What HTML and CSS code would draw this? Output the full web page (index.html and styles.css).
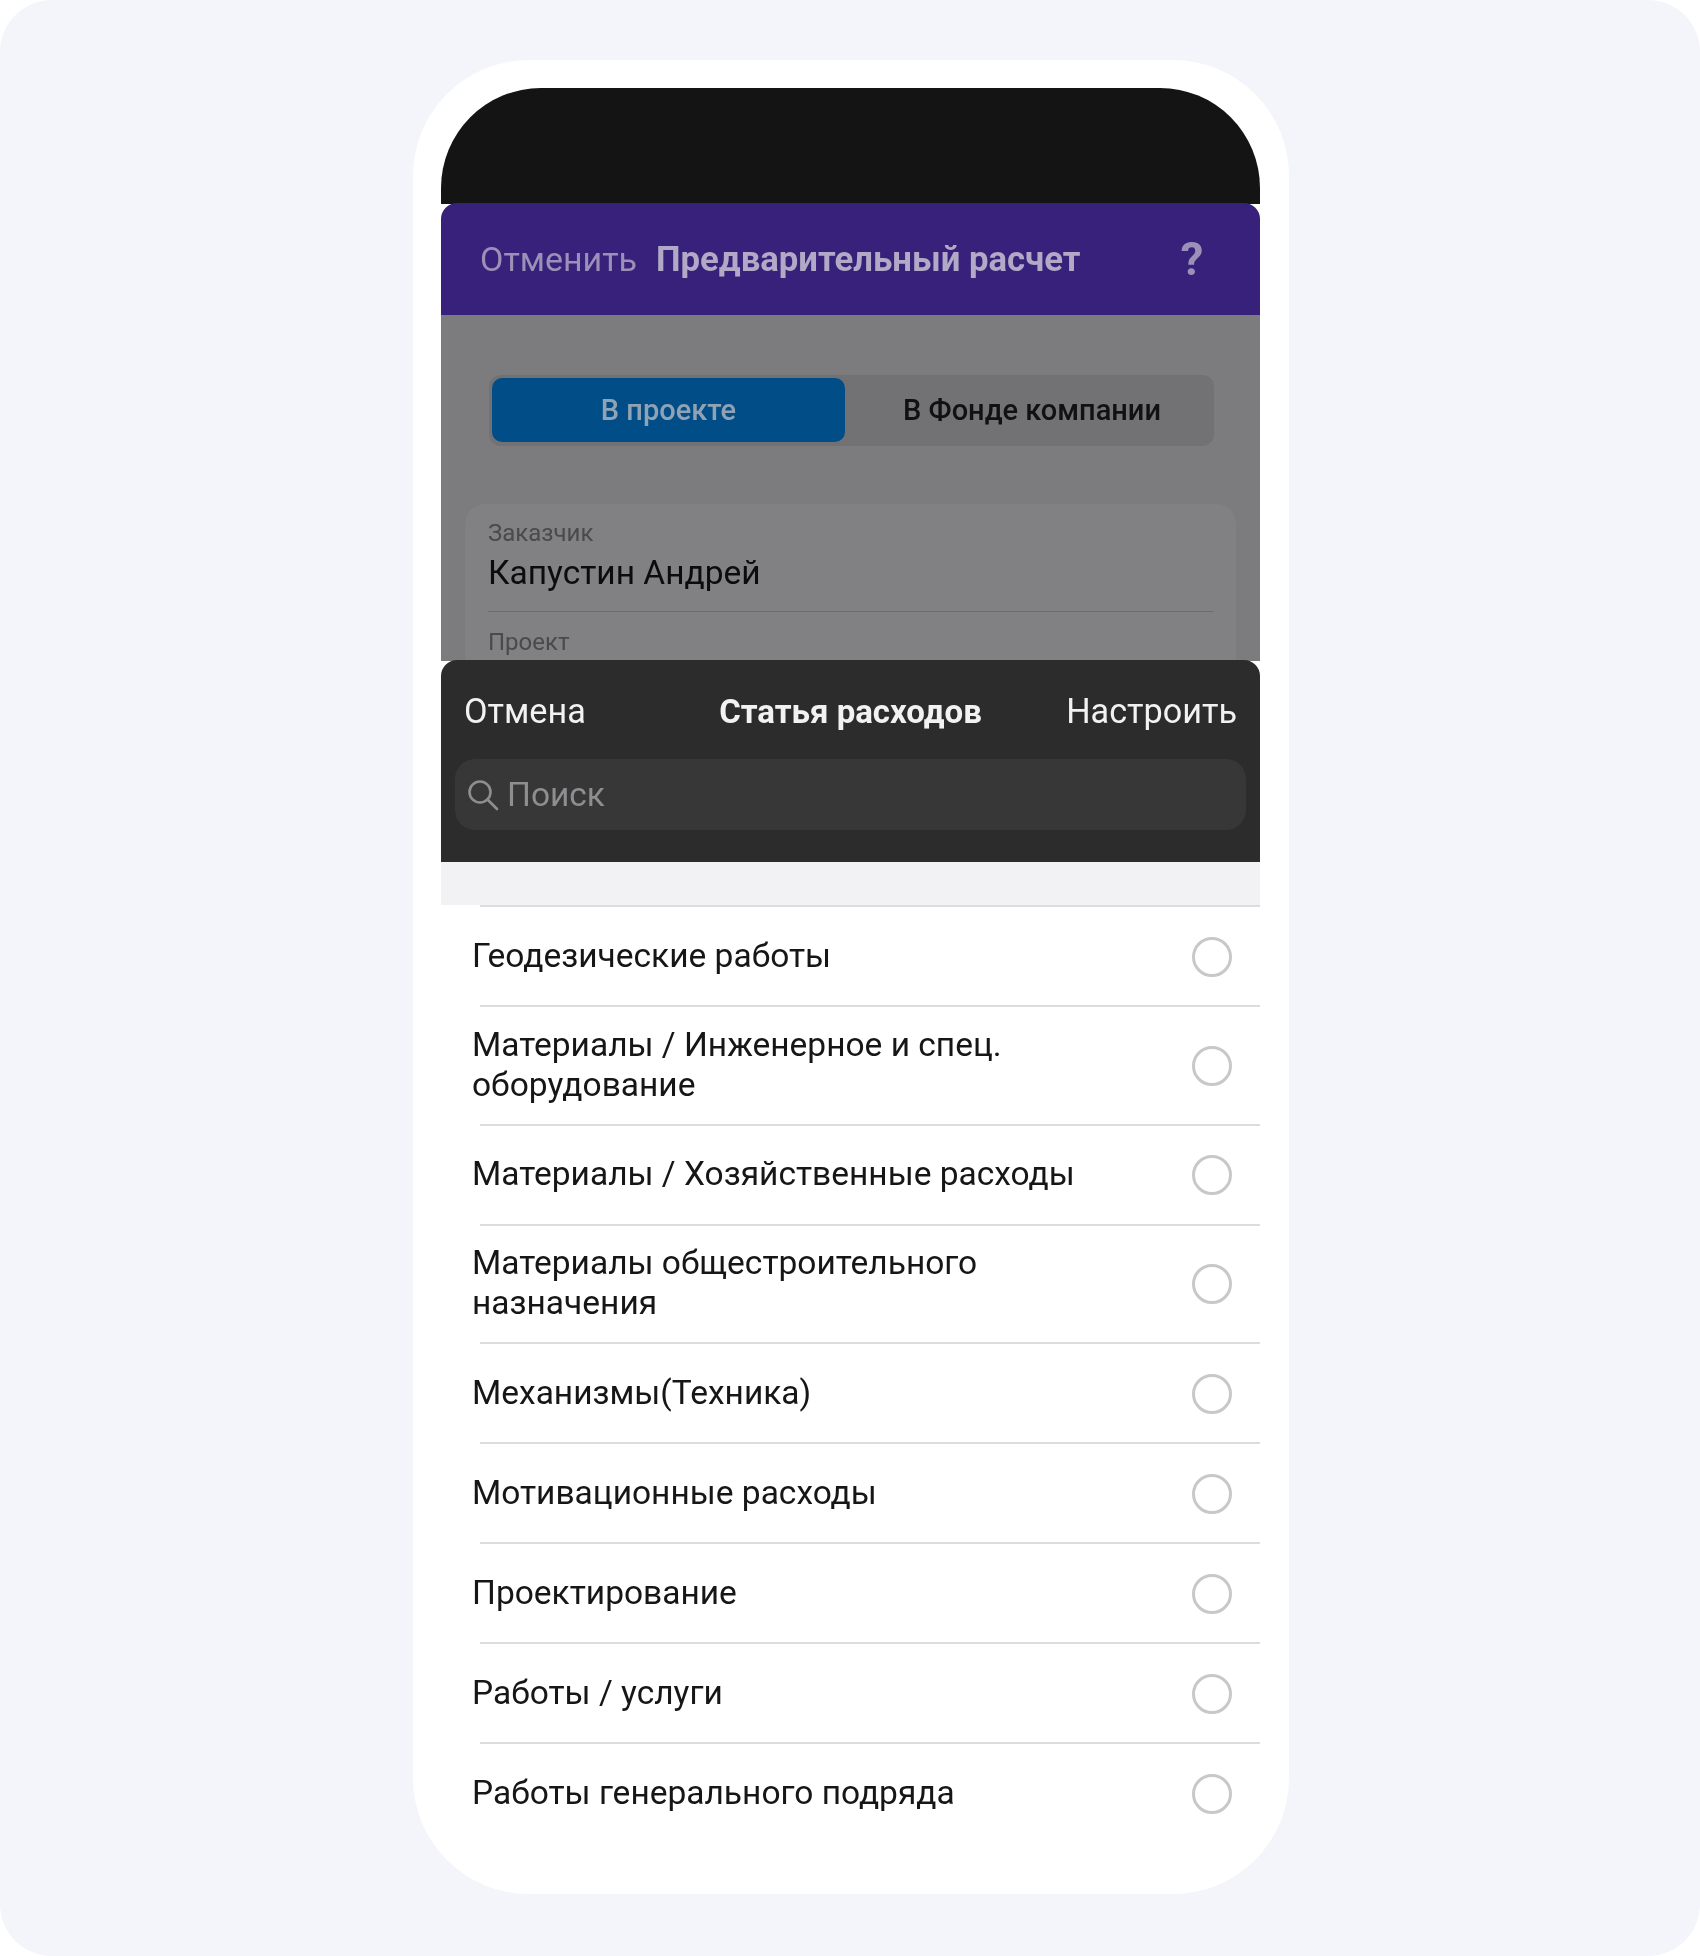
FILE: index.html
```html
<!DOCTYPE html>
<html>
<head>
  <title>Статья расходов</title>
  <link rel="stylesheet" href="styles.css">
</head>
<body>
  <div class="canvas">
    <div class="phone">
      <div class="screen">
        <div class="notch"></div>

        <div class="topbar">
          <span class="topbar-cancel">Отменить</span>
          <span class="topbar-title">Предварительный расчет</span>
          <span class="topbar-help">?</span>
        </div>

        <div class="backdrop">
          <div class="segment">
            <div class="segment-item active">В проекте</div>
            <div class="segment-item">В Фонде компании</div>
          </div>
          <div class="card">
            <div class="card-label">Заказчик</div>
            <div class="card-value">Капустин Андрей</div>
            <div class="card-line"></div>
            <div class="card-label">Проект</div>
          </div>
        </div>

        <div class="sheet">
          <div class="sheet-head">
            <span class="sheet-side">Отмена</span>
            <span class="sheet-title">Статья расходов</span>
            <span class="sheet-side right">Настроить</span>
          </div>
          <div class="search">
            <svg class="search-icon" width="34" height="34" viewBox="0 0 34 34" fill="none" stroke="#8e8e90" stroke-width="2.6">
              <circle cx="14" cy="14" r="10.5"/>
              <path d="M21.5 21.5 L31 31" stroke-linecap="round"/>
            </svg>
            <span>Поиск</span>
          </div>
        </div>
        <div class="band"></div>

        <div class="list">
          <div class="row">
            <div class="row-text">Геодезические работы</div>
            <div class="radio"></div>
          </div>
          <div class="row tall">
            <div class="row-text">Материалы / Инженерное и спец. оборудование</div>
            <div class="radio"></div>
          </div>
          <div class="row">
            <div class="row-text">Материалы / Хозяйственные расходы</div>
            <div class="radio"></div>
          </div>
          <div class="row tall">
            <div class="row-text">Материалы общестроительного назначения</div>
            <div class="radio"></div>
          </div>
          <div class="row">
            <div class="row-text">Механизмы(Техника)</div>
            <div class="radio"></div>
          </div>
          <div class="row">
            <div class="row-text">Мотивационные расходы</div>
            <div class="radio"></div>
          </div>
          <div class="row">
            <div class="row-text">Проектирование</div>
            <div class="radio"></div>
          </div>
          <div class="row">
            <div class="row-text">Работы / услуги</div>
            <div class="radio"></div>
          </div>
          <div class="row">
            <div class="row-text">Работы генерального подряда</div>
            <div class="radio"></div>
          </div>
        </div>
      </div>
    </div>
  </div>
</body>
</html>
```
FILE: styles.css
```css
body {
  margin: 0;
  background-color: #fff;
  font-family: Roboto, "Liberation Sans", sans-serif;
}

.canvas {
  height: 1956px;
  background-color: #f3f5fa;
  border-radius: 52px;
  padding-top: 60px;
  box-sizing: border-box;
}

.phone {
  width: 876px;
  height: 1834px;
  margin-left: 413px;
  padding: 28px 29px 0 28px;
  box-sizing: border-box;
  background-color: #fff;
  border-radius: 116px;
  overflow: hidden;
}

.screen {
  border-radius: 100px 100px 0 0;
  overflow: hidden;
  filter: blur(0.5px);
}

.notch {
  height: 116px;
  background-color: #141414;
}

.topbar {
  height: 112px;
  margin-top: -1px;
  padding: 0 0 0 39px;
  display: flex;
  align-items: center;
  background-color: #37217a;
  border-radius: 16px 16px 0 0;
  font-size: 34px;
}

.topbar-cancel {
  color: #9b90b7;
}

.topbar-title {
  margin-left: 19px;
  color: #b1a9c6;
  font-size: 34.7px;
  font-weight: 700;
}

.topbar-help {
  margin-left: 100px;
  color: #9b90b7;
  font-size: 46px;
  font-weight: 700;
}

.backdrop {
  height: 346px;
  padding: 60px 24px 0;
  box-sizing: border-box;
  background-color: #7c7c7e;
  overflow: hidden;
}

.segment {
  display: flex;
  width: 725px;
  height: 71px;
  margin-left: 24px;
  padding: 3px 3px 4px;
  box-sizing: border-box;
  background-color: #727274;
  border-radius: 12px;
  font-size: 29px;
  font-weight: 500;
  color: #111;
}

.segment-item {
  flex: 1;
  padding-left: 8px;
  display: flex;
  align-items: center;
  justify-content: center;
}

.segment-item.active {
  flex: none;
  width: 353px;
  padding-left: 0;
  background-color: #004d88;
  color: #8fa3b5;
  border-radius: 10px;
}

.card {
  margin-top: 58px;
  padding: 15px 22px 0 23px;
  height: 300px;
  background-color: #818183;
  border-radius: 20px;
}

.card-label {
  font-size: 24px;
  color: #4a4a4c;
}

.card-value {
  margin-top: 6px;
  font-size: 33.5px;
  color: #0c0c0c;
}

.card-line {
  margin: 19px 0 16px;
  height: 1px;
  background-color: #6c6c6e;
}

.sheet {
  height: 202px;
  padding: 0 23px;
  background-color: #2c2c2c;
  border-radius: 16px 16px 0 0;
  margin-top: -1px;
  color: #f2f2f2;
  font-size: 34.2px;
  box-sizing: border-box;
}

.sheet-head {
  height: 99px;
  padding-top: 3px;
  box-sizing: border-box;
  display: flex;
  align-items: center;
}

.sheet-side {
  flex: 1;
}

.sheet-side.right {
  text-align: right;
}

.sheet-title {
  font-weight: 700;
  font-size: 33px;
}

.search {
  height: 71px;
  margin: 0 -9px;
  padding-left: 11px;
  display: flex;
  align-items: center;
  gap: 7px;
  background-color: #373738;
  border-radius: 20px;
  color: #8e8e90;
  font-size: 33.5px;
}

.band {
  height: 43px;
  background-color: #f2f2f4;
}

.row {
  position: relative;
  height: 100px;
  padding: 1px 28px 0 31px;
  display: flex;
  align-items: center;
  justify-content: space-between;
  box-sizing: border-box;
}

.row.tall {
  height: 118.5px;
}

/* separators stop short of the left edge */
.row::before {
  content: "";
  position: absolute;
  top: 0;
  left: 39px;
  right: 0;
  height: 2px;
  background-color: #dcdcde;
}

.row-text {
  width: 640px;
  font-size: 33.5px;
  line-height: 40px;
  color: #161616;
}

.radio {
  width: 40px;
  height: 40px;
  margin-top: 2px;
  box-sizing: border-box;
  border: 3.5px solid #c8c8c8;
  border-radius: 50%;
}
```
